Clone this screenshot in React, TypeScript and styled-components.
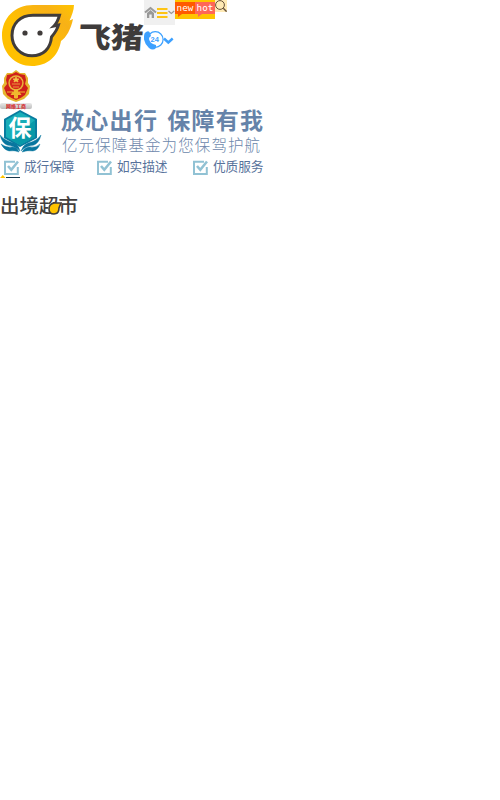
import React from "react";
import styled, { createGlobalStyle } from "styled-components";

const GlobalStyle = createGlobalStyle`
  body { margin: 0; background: #fff; font-family: "Noto Sans CJK SC", sans-serif; }
  svg { display: block; flex: none; }
`;
const Page = styled.main`display: flex; flex-direction: column; align-items: flex-start; width: 500px; height: 800px; overflow: hidden;`;
const Header = styled.header`display: flex; height: 70px;`;
const Brand = styled.div`display: flex; width: 144px; height: 70px;`;
const BrandName = styled.span`
  margin: 17px 0 0 3px; font-size: 32px; line-height: 36px; font-weight: 900;
  color: #3e3b3b; white-space: nowrap; height: 36px; transform: skewX(-4deg) scale(1.02, .9);
`;
const Tools = styled.div`display: flex; flex-direction: column;`;
const ToolRow = styled.div`display: flex; height: 30px;`;
const MenuBlock = styled.div`display: flex; width: 31px; height: 25px; background: #f0f0f0;`;
const Tags = styled.div`display: flex; width: 40px; height: 17px; padding-top: 2px; background: #ffc400;`;
const Tag = styled.span<{ $color: string; $width: number }>`
  position: relative; width: ${p => p.$width}px; height: 12px; background: ${p => p.$color};
  color: #fff; font: 9.3px/11px "DejaVu Sans Mono", monospace; text-align: center;
  &::after { content: ""; position: absolute; left: 3px; top: 12px; border-top: 3px solid ${p => p.$color}; border-right: 4px solid transparent; }
`;
const Police = styled.div`display: flex; flex-direction: column; width: 32px; height: 39px;`;
const Plate = styled.span`
  height: 6px; width: 32px; background: linear-gradient(#e9e9e9, #bcbcbc); border-radius: 2px;
  color: #d5211e; font-size: 5px; line-height: 6px; font-weight: 700; text-align: center; white-space: nowrap;
`;
const Banner = styled.section`display: flex; flex-direction: column; width: 270px; height: 69px;`;
const BannerTop = styled.div`display: flex; height: 46px;`;
const Slogan = styled.div`display: flex; flex-direction: column; margin-left: 19px;`;
const Title = styled.h1`
  display: flex; gap: 9px; margin: 0; height: 23px; font-size: 23px; line-height: 21px;
  font-weight: 700; letter-spacing: 1.3px; color: #6583a9; white-space: nowrap;
`;
const Subtitle = styled.p`margin: 2px 0 0 1px; font-size: 15.5px; line-height: 20px; font-weight: 300; letter-spacing: 1.1px; color: #6c87ab; white-space: nowrap;`;
const Promises = styled.div`display: grid; grid-template-columns: 93px 96px 80px; height: 23px; padding-left: 4px;`;
const PromiseItem = styled.div`display: flex; gap: 5px; font-size: 12.7px; line-height: 22px; color: #57729b; white-space: nowrap; letter-spacing: -0.1px;`;
const Market = styled.div`display: flex; margin-top: 17px; height: 22px; color: #433f3e; width: 80px;`;
const MarketText = styled.span`font-size: 19.5px; line-height: 20px; font-weight: 500; white-space: nowrap;`;
const MarketMark = styled.span`
  position: relative; display: inline-block;
  svg { position: absolute; left: 9px; top: 7px; }
`;

const Pig = () => (
  <svg width="76" height="70" viewBox="0 0 76 70">
    <defs>
      <linearGradient id="gold" x1="0" y1="1" x2="1" y2="0">
        <stop offset=".45" stopColor="#ffc000" /><stop offset=".78" stopColor="#f8b117" /><stop offset="1" stopColor="#ffc400" />
      </linearGradient>
    </defs>
    <path fill="url(#gold)" d="M74 5H33C15 5 2 18 2 35.5S15 66 32 66C47 66 58 57 61 41C66 38 71 29 73 19L69.5 20.5C71.5 16 74 10 74 5Z" />
    <path fill="#fff" stroke="#403c3b" strokeWidth="3" d="M59.5 15.2H33C20 15.2 12 24 12 35.5C12 47 21 55.8 32 55.8C43 55.8 50.5 49 51.5 37C54 34 57.5 29 58.5 25L54 26C57 23 58.5 19 59.5 15.2Z" />
    <circle cx="25" cy="33" r="2.6" fill="#403c3b" /><circle cx="40" cy="33" r="2.6" fill="#403c3b" />
  </svg>
);

const MenuIcons = () => (
  <svg width="31" height="25" viewBox="0 0 31 25" fill="none">
    <path d="M1 12.5L6.5 8L12 12.5" stroke="#999" strokeWidth="2" /><path d="M3 13L6.5 10L10 13V18H7.7V14.5H5.3V18H3Z" fill="#999" />
    <path d="M13 9H23.5M13 13H23.5M13 17H23.5" stroke="#fec414" strokeWidth="2" />
    <path d="M24.5 11L27.3 13.5L30.2 11" stroke="#999" strokeWidth="1.2" />
  </svg>
);

const Service = () => (
  <svg width="30" height="21" viewBox="0 0 30 21">
    <circle cx="11.3" cy="9.5" r="7.8" fill="#fff" stroke="#3ca0ff" strokeWidth="1.2" />
    <path d="M2 2Q5 0 6 3L7 6Q5 7 5 9Q6 13 9 14L12 15L12 18Q9 21 5 18Q-1 12 0 6Q0 3 2 2Z" fill="#3ca0ff" />
    <text x="6.5" y="12.3" fontSize="7.5" fontWeight="700" fontFamily="Liberation Sans, sans-serif" fill="#3ca0ff">24</text>
    <path d="M20 8.5L24.3 12.5L28.7 8.5" fill="none" stroke="#3ca0ff" strokeWidth="2.4" />
  </svg>
);

const Emblem = () => (
  <svg width="32" height="33" viewBox="0 0 32 33">
    <path d="M16 0L20 3L25 3L28 8L28 13L30 16L29 24L24 29L16 32L8 29L3 24L2 16L4 13L4 8L7 3L12 3Z" fill="#e6b52f" />
    <path d="M16 2Q20 5 25 5L26 10L25 14L28 18L25 25Q20 29 16 30Q12 29 7 25L4 18L7 14L6 10L7 5Q12 5 16 2Z" fill="#cf201a" />
    <circle cx="16" cy="13" r="7.7" fill="#e9b63c" /><circle cx="16" cy="13" r="6.2" fill="#d6271b" />
    <path d="M16 7L17 9H19L17.5 10L18 12L16 11L14 12L14.5 10L13 9H15ZM12 14H20M13 17H19" fill="#f4c84a" stroke="#f4c84a" strokeWidth=".7" />
    <path d="M7 22H25M11 25L13 22L16 26L19 22L21 25M14.5 20H17.5V28H14.5Z" fill="#f0b92e" stroke="#f0b92e" />
  </svg>
);

const Shield = () => (
  <svg width="42" height="44" viewBox="0 0 42 44">
    <path d="M20 1L37 10V29L20 38L4 29V10Z" fill="#087c9f" />
    <path d="M20 3L35 11V28L20 36L6 28V11Z" fill="#18aeb8" /><path d="M35 11V28L20 36L11 31Z" fill="#0799a8" />
    <text x="8.5" y="27.2" fontSize="23" fontWeight="700" fontFamily="Noto Sans CJK SC, sans-serif" fill="#fff">保</text>
    <path d="M0 26Q5 32 14 34Q19 36 20 42Q15 37 7 36Q2 34 0 26ZM41 26Q37 32 28 34Q23 36 21 42Q26 37 34 36Q39 34 41 26ZM1 35Q6 39 12 38Q17 38 19 43Q14 41 9 42Q4 41 1 35ZM40 35Q36 39 30 38Q25 38 22 43Q28 41 33 42Q38 41 40 35Z" fill="#08769f" stroke="#08769f" strokeWidth=".4" />
  </svg>
);

const Check = () => (
  <svg width="15" height="22" viewBox="0 0 15 22" fill="none" stroke="#91c2d4">
    <path d="M11 6.8H1V19H13.8V12" strokeWidth="2" /><path d="M4 11L7.3 14.8L14 6.5" strokeWidth="2.6" />
  </svg>
);

const Strip = () => (
  <svg width="22" height="3" viewBox="0 0 22 3"><path d="M0 3L2.8 0L5.5 3Z" fill="#ffc400" /><path d="M6 2.5H20" stroke="#17384c" /></svg>
);
const StripLine = styled.div`height: 3px; margin-top: -3px; z-index: 1;`;

export default function App() {
  return (
    <Page>
      <GlobalStyle />
      <Header>
        <Brand><Pig /><BrandName>飞猪</BrandName></Brand>
        <Tools>
          <ToolRow>
            <MenuBlock><MenuIcons /></MenuBlock>
            <Tags><Tag $color="#ff5a00" $width={20}>new</Tag><Tag $color="#ff6657" $width={20}>hot</Tag></Tags>
            <svg width="12" height="12" viewBox="0 0 12 12"><path fill="#ffeab5" d="M0 0H12V12H0Z" /><circle cx="5" cy="5" r="4.4" fill="none" stroke="#65503a" /><path d="M8.3 8.3L11.6 11.6" stroke="#65503a" strokeWidth="1.4" /></svg>
          </ToolRow>
          <Service />
        </Tools>
      </Header>
      <Police><Emblem /><Plate>网络工商</Plate></Police>
      <Banner>
        <BannerTop>
          <Shield />
          <Slogan>
            <Title><span>放心出行</span><span>保障有我</span></Title>
            <Subtitle>亿元保障基金为您保驾护航</Subtitle>
          </Slogan>
        </BannerTop>
        <Promises>
          {["成行保障", "如实描述", "优质服务"].map(label => <PromiseItem key={label}><Check />{label}</PromiseItem>)}
        </Promises>
      </Banner>
      <StripLine><Strip /></StripLine>
      <Market>
        <MarketText>出境<MarketMark>超<svg width="14" height="13" viewBox="0 0 14 13"><path d="M13 1H6Q1 2 1 7Q1 12 6 12Q11 12 11 6Z" fill="#ffc400" stroke="#433f3e" strokeWidth="1.6" /></svg></MarketMark>市</MarketText>
      </Market>
    </Page>
  );
}
